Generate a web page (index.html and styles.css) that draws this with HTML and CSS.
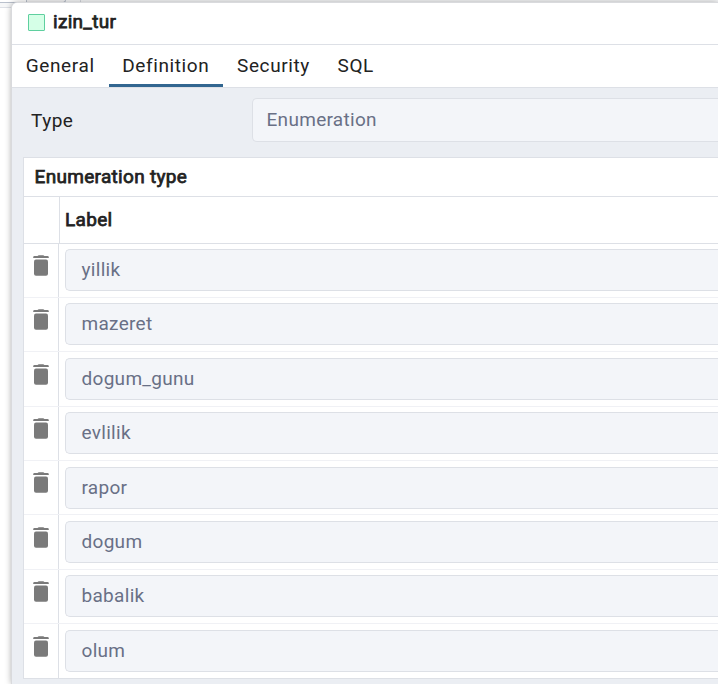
FILE: index.html
```html
<!DOCTYPE html>
<html lang="en">
<head>
<meta charset="utf-8">
<title>izin_tur</title>
<link rel="stylesheet" href="styles.css">
</head>
<body>
<svg class="symbols" width="0" height="0"><symbol id="trash" viewBox="0 0 16 21"><path d="M4.600 1.100Q5 .3 6 .3h4q1 0 1.400.8h3.100q1.300 0 1.300 1.100v.7H.2v-.7q0-1.100 1.300-1.100z"/><path d="M3 4.500h10q2 0 2 2v12.300q0 2-2 2H3q-2 0-2-2V6.500q0-2 2-2z"/></symbol></svg>
<div class="backdrop"><div class="back-tab"></div><div class="back-tab second"></div><div class="back-rule"></div></div>
<main class="dialog">
  <header class="title"><span class="type-icon"></span><span class="strong">izin_tur</span></header>
  <nav class="tabs"><a class="tab">General</a><a class="tab active">Definition</a><a class="tab">Security</a><a class="tab">SQL</a></nav>
  <section class="panel">
    <div class="field"><label>Type</label><div class="input">Enumeration</div></div>
    <div class="grid">
      <h2 class="strong">Enumeration type</h2>
      <div class="head"><div class="head-action"></div><div class="head-label strong">Label</div></div>
      <div class="row"><div class="action"><svg><use href="#trash"/></svg></div><div class="cell"><div class="input">yillik</div></div></div>
      <div class="row"><div class="action"><svg><use href="#trash"/></svg></div><div class="cell"><div class="input">mazeret</div></div></div>
      <div class="row"><div class="action"><svg><use href="#trash"/></svg></div><div class="cell"><div class="input">dogum_gunu</div></div></div>
      <div class="row"><div class="action"><svg><use href="#trash"/></svg></div><div class="cell"><div class="input">evlilik</div></div></div>
      <div class="row"><div class="action"><svg><use href="#trash"/></svg></div><div class="cell"><div class="input">rapor</div></div></div>
      <div class="row"><div class="action"><svg><use href="#trash"/></svg></div><div class="cell"><div class="input">dogum</div></div></div>
      <div class="row"><div class="action"><svg><use href="#trash"/></svg></div><div class="cell"><div class="input">babalik</div></div></div>
      <div class="row"><div class="action"><svg><use href="#trash"/></svg></div><div class="cell"><div class="input">olum</div></div></div>
    </div>
  </section>
</main>
</body>
</html>
```

FILE: styles.css
```css
* { box-sizing: border-box; }
body {
  margin: 0;
  height: 684px;
  overflow: hidden;
  padding: 3px 0 0 12px;
  background: #fff;
  color: #222;
  font: 19px/22px Roboto, sans-serif;
}
.symbols { position: absolute; }
.backdrop {
  position: absolute;
  inset: 0 0 auto 0;
  height: 8px;
  display: flex;
  background: #f6f7f8;
  border-bottom: 1px solid #dde0e6;
}
.back-tab { width: 27px; height: 3px; background: #fff; border: solid #bac1cd; border-width: 0 1px 1px 0; }
.back-tab.second { width: 39px; background: #f3f3f4; border-radius: 0 0 4px 0; }
.back-rule { width: 15px; height: 3px; border-right: 1px solid #d5d8de; }
.dialog {
  position: relative;
  height: 681px;
  overflow: hidden;
  background: #ebeef3;
  border-radius: 5px 0 0 0;
  box-shadow: 0 0 0 1px #d9dadd, 0 0 7px rgba(0, 0, 0, .4);
}
.strong { font-weight: 400; -webkit-text-stroke: .75px #222; letter-spacing: .3px; }
.title {
  display: flex;
  align-items: center;
  gap: 8px;
  height: 42px;
  padding: 0 0 4px 16px;
  background: #fff;
  border-bottom: 1px solid #dde0e6;
}
.type-icon { width: 17px; height: 17px; margin-top: 2px; background: #d5ffe7; border: 1px solid #5fcf9f; border-radius: 1px; }
.tabs { display: flex; height: 43px; background: #fff; border-bottom: 1px solid #dde0e6; }
.tab { height: 42px; padding: 10px 13.9px 0 13.8px; letter-spacing: .6px; }
.active { border-bottom: 3px solid #326690; }
.panel { padding: 10px 0 0 11px; letter-spacing: .3px; }
.field { display: flex; height: 44px; margin-bottom: 15px; }
.field label { width: 229px; padding: 12px 0 0 8px; letter-spacing: .5px; }
.input {
  flex: 1;
  height: 44px;
  padding: 10px 13.5px;
  background: #f3f5f9;
  border: 1px solid #dde0e6;
  border-right: 0;
  border-radius: 5px 0 0 5px;
  color: #697086;
}
.grid { background: #fff; border: 1px solid #dde0e6; border-right: 0; }
.grid h2 { height: 39px; margin: 0; padding: 8px 10.6px; border-bottom: 1px solid #dde0e6; font-size: 19px; }
.head { display: flex; height: 46.6px; border-bottom: 1px solid #dde0e6; }
.head-action { width: 36px; border-right: 1px solid #dde0e6; }
.head-label { padding: 12px 5px; }
.row { display: flex; height: 54.36px; border-bottom: 1px solid #f0f1f5; }
.row:last-child { height: 54px; border-bottom: 0; }
.action { width: 35px; padding: 11.4px 0 0 8.6px; border-right: 1px solid #dde0e6; }
.action svg { display: block; width: 16px; height: 21px; fill: #7a7a7a; }
.cell { flex: 1; padding: 5.5px 0 0 6px; }
.cell .input { height: 42px; padding: 9px 15.5px; }
```
